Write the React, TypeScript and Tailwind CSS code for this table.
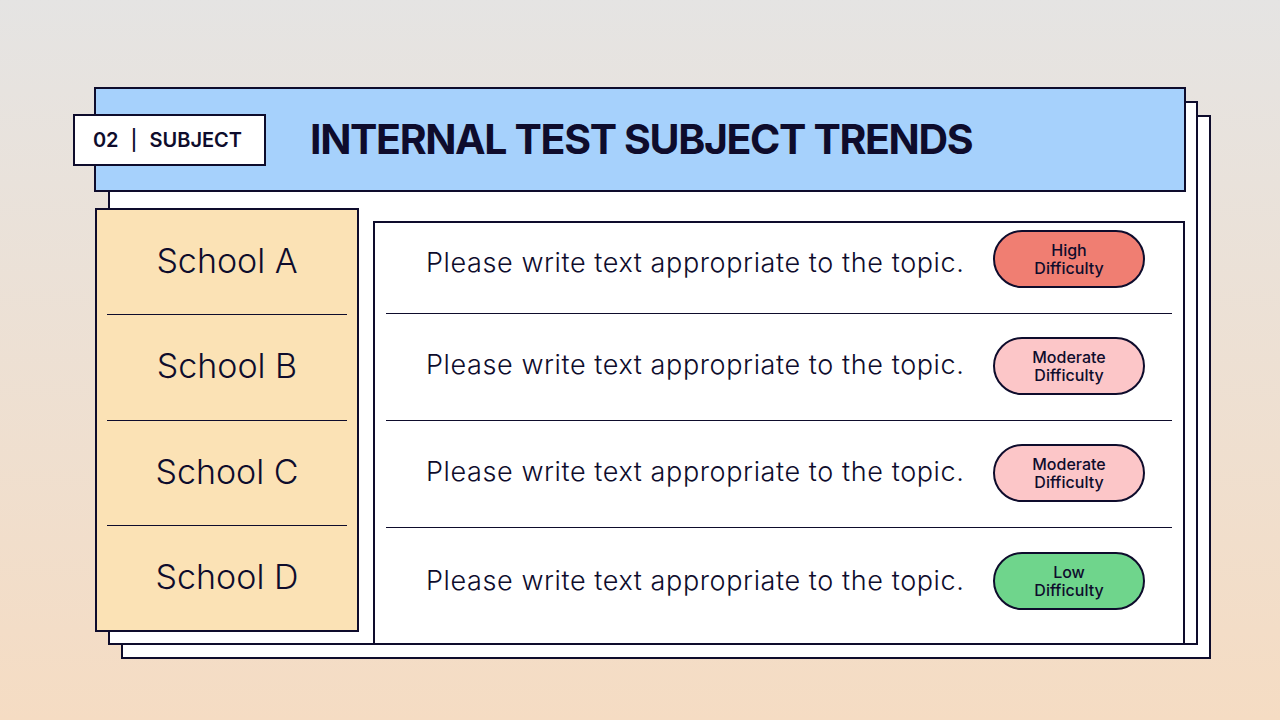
import React from "react";

const rows = [
  { school: "School A", level: ["High", "Difficulty"], pill: "bg-[#f07e72]", h: "h-[90px]", pb: "pb-[18px]", tm: "mt-[8px]" },
  { school: "School B", level: ["Moderate", "Difficulty"], pill: "bg-[#fcc6c8]", h: "h-[106px]", pb: "pb-[3px]", tm: "mt-0" },
  { school: "School C", level: ["Moderate", "Difficulty"], pill: "bg-[#fcc6c8]", h: "h-[106px]", pb: "pb-[3px]", tm: "mt-0" },
  { school: "School D", level: ["Low", "Difficulty"], pill: "bg-[#6fd58c]", h: "h-[115px]", pb: "pb-[9px]", tm: "mt-0" },
];

export default function App() {
  return (
    <div
      className="w-[1280px] h-[720px] overflow-hidden bg-gradient-to-b from-[#e5e4e3] to-[#f5dcc3] text-[#0e0c2c]"
      style={{ fontFamily: "Inter, 'Noto Sans', sans-serif" }}
    >
      <div className="relative ml-[94px] mt-[87px] w-[1092px] h-[558px]">
        {/* stacked back sheets */}
        <div className="absolute left-[27px] top-[28px] w-[1090px] h-[544px] bg-white border-2 border-[#0e0c2c]" />
        <div className="absolute left-[14px] top-[14px] w-[1090px] h-[544px] bg-white border-2 border-[#0e0c2c]" />

        <div className="relative flex flex-col">
          {/* header */}
          <div className="h-[105px] bg-[#a6d1fc] border-2 border-[#0e0c2c] flex items-center">
            <div className="-ml-[23px] w-[193px] h-[52px] bg-white border-2 border-[#0e0c2c] flex items-center justify-center text-[20px] font-semibold">
              <span className="-ml-[4px]">02</span>
              <span className="mx-[12px] font-medium">|</span>
              <span>SUBJECT</span>
            </div>
            <h1 className="ml-[44px] text-[41px] font-bold leading-none tracking-[-1.35px]">
              INTERNAL TEST SUBJECT TRENDS
            </h1>
          </div>

          <div className="flex">
            {/* school column */}
            <div className="mt-[16px] ml-px w-[264px] h-[424px] bg-[#fbe2b5] border-2 border-[#0e0c2c] flex flex-col">
              {rows.map((r, i) => (
                <React.Fragment key={r.school}>
                  {i > 0 && <div className="mx-[10px] h-px bg-[#0e0c2c]" />}
                  <div className="flex-1 flex items-center justify-center pb-[3px] text-[34px] font-light tracking-[0px]">
                    {r.school}
                  </div>
                </React.Fragment>
              ))}
            </div>

            {/* table */}
            <div className="mt-[29px] ml-[14px] w-[812px] h-[424px] bg-white border-2 border-[#0e0c2c] flex flex-col">
              {rows.map((r, i) => (
                <React.Fragment key={r.school}>
                  {i > 0 && <div className="mx-[11px] h-px bg-[#0e0c2c]" />}
                  <div className={`${r.h} ${r.pb} flex items-center pl-[51px] pr-[38px]`}>
                    <div className={`${r.tm} flex-1 text-[27px] font-light tracking-[0.6px]`}>
                      Please write text appropriate to the topic.
                    </div>
                    <div
                      className={`${r.pill} w-[152px] h-[58px] rounded-full border-2 border-[#0e0c2c] flex flex-col items-center justify-center text-[16px] leading-[18px] font-medium`}
                    >
                      <span>{r.level[0]}</span>
                      <span>{r.level[1]}</span>
                    </div>
                  </div>
                </React.Fragment>
              ))}
            </div>
          </div>
        </div>
      </div>
    </div>
  );
}
